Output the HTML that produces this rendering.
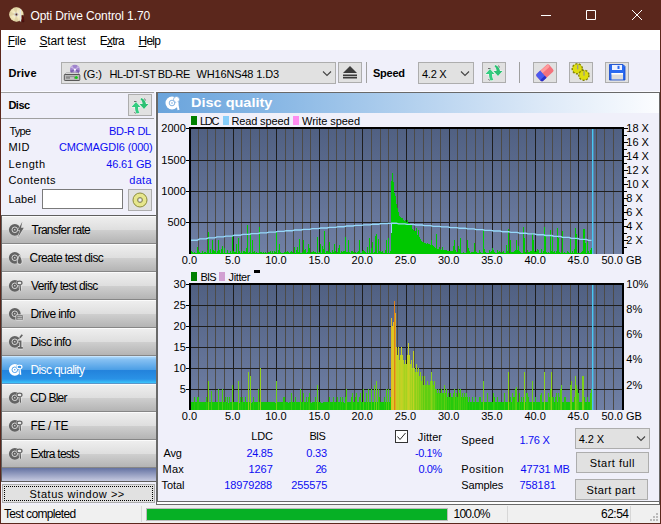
<!DOCTYPE html>
<html><head><meta charset="utf-8"><title>Opti Drive Control 1.70</title>
<style>
html,body{margin:0;padding:0}
body{width:661px;height:524px;overflow:hidden;background:#5b271c;position:relative;font-family:"Liberation Sans",sans-serif;font-size:12px;color:#000;line-height:14px}
.a{position:absolute;white-space:nowrap}
.b{font-weight:bold}
.bl{color:#0c0cf2}
.r{text-align:right}
.btn{position:absolute;background:#e1e1e1;border:1px solid #adadad;box-sizing:border-box}
.nav{position:absolute;left:2px;width:154px;height:28px;background:linear-gradient(#eeeeee 0%,#dedede 50%,#cfcfcf 50%,#b4b4b4 100%);border-top:1px solid #fbfbfb;border-bottom:1px solid #868686;box-sizing:border-box}
.nav span{position:absolute;left:29px;top:6px;font-size:12px;letter-spacing:-0.3px}
.nav.sel{background:linear-gradient(#a8d6fa 0%,#86c0f2 10%,#4c9fe6 49%,#2383dc 52%,#2a92e6 85%,#3cc6fc 100%);border-top-color:#c8e6ff;border-bottom-color:#5a96c8}
svg{position:absolute;overflow:visible}
</style></head><body>
<!-- title bar -->
<div class="a" style="left:0;top:0;width:661px;height:30px;background:#5b271c"></div>
<svg style="left:0;top:0" width="40" height="30" viewBox="0 0 40 30"><defs><radialGradient id="tg"><stop offset="0" stop-color="#fff8dc"/><stop offset="1" stop-color="#e8dcaa"/></radialGradient></defs><circle cx="16.4" cy="14.5" r="7.2" fill="url(#tg)"/><path d="M16.4 14.5L10 11.500L9.500 16ZM16.400 14.500L14 21L18.500 21.200ZM16.400 14.500L13 8L17.500 7.500Z" fill="#d8cc9c" opacity="0.7"/><circle cx="16.4" cy="14.5" r="2.1" fill="#c8c8c8"/><circle cx="16.4" cy="14.5" r="0.9" fill="#5a281c"/><path d="M19.6 9.500L21 8.800L21.200 21.600L19.800 21.600Z" fill="#e4e4e4"/><path d="M21.800 15.400L23.200 15.400L24 21.800L22 21.800Z" fill="#6e0a0a" stroke="#281010" stroke-width="0.5"/></svg>
<svg style="left:540px;top:7px" width="110" height="16" viewBox="0 0 110 16"><path d="M1 8.5H11M46.5 3.5H55.5V12.5H46.5ZM92 3L102 13M102 3L92 13" fill="none" stroke="#fff" stroke-width="1"/></svg>
<!-- menu -->
<div class="a" style="left:1px;top:30px;width:659px;height:20px;background:#fff"></div>
<!-- client bg -->
<div class="a" style="left:1px;top:50px;width:659px;height:473px;background:#f0f0fa"></div>
<!-- toolbar -->
<div class="btn" style="left:61px;top:62px;width:275px;height:22px"></div>
<svg style="left:322px;top:70px" width="10" height="8" viewBox="0 0 10 8"><path d="M1 1.5L5 5.5L9 1.5" fill="none" stroke="#444" stroke-width="1.1"/></svg>
<svg style="left:62px;top:62px" width="22" height="22" viewBox="62 62 22 22"><circle cx="74.9" cy="69.7" r="4.9" fill="#9f84cc"/><path d="M74.900 69.700L70.500 67.500L72 65.500ZM74.900 69.700L79.300 67.500L78 65.700ZM74.900 69.700L73 74.300L76.500 74.400Z" fill="#c8b4e6"/><path d="M74.900 69.700L70.200 70.500L71 73ZM74.900 69.700L79.700 70.500L78.800 73Z" fill="#7a5cac"/><circle cx="74.900" cy="69.700" r="1.1" fill="#fff"/><path d="M66.500 72.800H77.500L79.800 74.600H64.300Z" fill="#e6e6e6" stroke="#787878" stroke-width="0.5"/><rect x="64.3" y="74.500" width="15.500" height="6" rx="0.8" fill="#b9b9b9" stroke="#4b4b4b" stroke-width="0.9"/><rect x="66" y="76.300" width="9" height="2.400" fill="#8a8a8a"/><rect x="70" y="77.500" width="4" height="1" fill="#f0f0f0"/><circle cx="76.300" cy="77.500" r="1.500" fill="#14c814"/></svg>
<div class="btn" style="left:338px;top:62px;width:24px;height:21px"></div>
<svg style="left:342px;top:65px" width="16" height="16" viewBox="0 0 16 16"><path d="M8 1L15 8H1Z" fill="#3c3c3c"/><rect x="1" y="9.5" width="14" height="4" fill="#3c3c3c"/><rect x="1" y="11" width="14" height="1" fill="#bbb"/></svg>
<div class="a" style="left:366px;top:62px;width:1px;height:21px;background:#a0a0a0"></div>
<div class="btn" style="left:418px;top:62px;width:56px;height:22px"></div>
<svg style="left:460px;top:70px" width="10" height="8" viewBox="0 0 10 8"><path d="M1 1.5L5 5.5L9 1.5" fill="none" stroke="#444" stroke-width="1.1"/></svg>
<div class="btn" style="left:482px;top:62px;width:24px;height:21px"></div>
<svg style="left:482px;top:62px" width="24" height="21" viewBox="0 0 24 21"><path d="M3.500 12L8 7L12.500 12H10C10 14.500 10.500 16.500 11.500 18L8.500 18.500C7.500 16.500 7 14.500 7 12Z" fill="#34cc80" stroke="#f6fff8" stroke-width="1" paint-order="stroke"/><path d="M13 3C15.500 3.500 17.500 5.500 18 9H20.500L16 14L11.500 9H14.500C14.500 7 14 5.500 12.500 4.500Z" fill="#2cc074" stroke="#f6fff8" stroke-width="1" paint-order="stroke"/><path d="M6 6.500H8.500M16.500 3.500L17.500 5.500M6.500 17L7.500 18.500" stroke="#3c3c3c" stroke-width="0.700" fill="none"/></svg>
<div class="a" style="left:519px;top:62px;width:1px;height:21px;background:#a0a0a0"></div>
<div class="btn" style="left:533px;top:62px;width:24px;height:21px"></div>
<svg style="left:533px;top:62px" width="24" height="21" viewBox="533 62 24 21"><g transform="rotate(-42 545 73)"><rect x="536.500" y="68" width="17" height="9.500" rx="2" fill="#f4727c"/><rect x="537" y="68.500" width="16" height="3" rx="1.500" fill="#ff9c9c"/><path d="M538.500 68H543V77.500H538.500A2 2 0 0 1 536.500 75.500V70A2 2 0 0 1 538.500 68Z" fill="#4a5af0"/><path d="M538.500 75H543V77.500H538.500A2 2 0 0 1 536.500 75.500Z" fill="#2832c8"/></g></svg>
<div class="btn" style="left:569px;top:62px;width:24px;height:21px"></div>
<svg style="left:569px;top:62px" width="24" height="21" viewBox="569 62 24 21"><circle cx="577.3" cy="68.8" r="5" fill="#d4d400" stroke="#84840a" stroke-width="1.600" stroke-dasharray="2 1.500"/><circle cx="577.3" cy="68.8" r="4.300" fill="#dede10"/><rect x="577.1" y="64.8" width="1.200" height="4.500" fill="#969696"/><circle cx="583.9" cy="75.2" r="5" fill="#d4d400" stroke="#84840a" stroke-width="1.600" stroke-dasharray="2 1.500"/><circle cx="583.9" cy="75.2" r="4.300" fill="#dede10"/><rect x="583.4" y="71.2" width="1.200" height="4.500" fill="#969696"/></svg>
<div class="btn" style="left:605px;top:62px;width:24px;height:21px"></div>
<svg style="left:605px;top:62px" width="24" height="21" viewBox="605 62 24 21"><path d="M609.500 64.500H623L625 66.500V80H609.500Z" fill="#2a6af0" stroke="#1446c8" stroke-width="0.800"/><rect x="612" y="65" width="10" height="5" fill="#eef2ff"/><rect x="617.500" y="65.800" width="2" height="3.200" fill="#2a6af0"/><rect x="611.500" y="73" width="11.500" height="6.500" fill="#dcdcdc"/><rect x="611.500" y="73" width="11.500" height="1.500" fill="#fff"/></svg>
<!-- left panel -->
<div class="a" style="left:1px;top:92px;width:153px;height:1px;background:#a0a0a0"></div>
<div class="a" style="left:1px;top:118px;width:153px;height:1px;background:#a0a0a0"></div>
<div class="btn" style="left:128px;top:94px;width:24px;height:22px"></div>
<svg style="left:128px;top:94.500px" width="24" height="21" viewBox="0 0 24 21"><path d="M3.500 12L8 7L12.500 12H10C10 14.500 10.500 16.500 11.500 18L8.500 18.500C7.500 16.500 7 14.500 7 12Z" fill="#34cc80" stroke="#f6fff8" stroke-width="1" paint-order="stroke"/><path d="M13 3C15.500 3.500 17.500 5.500 18 9H20.500L16 14L11.500 9H14.500C14.500 7 14 5.500 12.500 4.500Z" fill="#2cc074" stroke="#f6fff8" stroke-width="1" paint-order="stroke"/><path d="M6 6.500H8.500M16.500 3.500L17.500 5.500M6.500 17L7.500 18.500" stroke="#3c3c3c" stroke-width="0.700" fill="none"/></svg>
<div class="a" style="left:42px;top:189px;width:81px;height:20px;background:#fff;border:1px solid #7a7a7a;box-sizing:border-box"></div>
<div class="btn" style="left:128px;top:189px;width:24px;height:22px"></div>
<svg style="left:132px;top:192px" width="16" height="16" viewBox="0 0 16 16"><circle cx="8" cy="8" r="7" fill="#e6e68c" stroke="#8c8c3c" stroke-width="1"/><circle cx="8" cy="8" r="2.5" fill="#c8c8c8" stroke="#78783c" stroke-width="0.8"/><circle cx="8" cy="8" r="1" fill="#fff"/></svg>
<!-- nav -->
<div class="a" style="left:1px;top:215px;width:155px;height:267px;background:#5f5f5f"></div>
<div class="nav" style="top:216px"></div>
<div class="nav" style="top:244px"></div>
<div class="nav" style="top:272px"></div>
<div class="nav" style="top:300px"></div>
<div class="nav" style="top:328px"></div>
<div class="nav sel" style="top:356px"></div>
<div class="nav" style="top:384px"></div>
<div class="nav" style="top:412px"></div>
<div class="nav" style="top:440px"></div>
<div class="a" style="left:2px;top:468px;width:154px;height:13px;background:linear-gradient(#6472a2,#c6cae0)"></div>
<div class="btn" style="left:2px;top:484px;width:153px;height:19px"></div>
<div class="a" style="left:4px;top:486px;width:147px;height:13px;border:1px dotted #000"></div>
<!-- main panel -->
<div class="a" style="left:1px;top:91px;width:659px;height:1px;background:#fafaff"></div>
<div class="a" style="left:155px;top:92px;width:1px;height:123px;background:#fafaff"></div>
<div class="a" style="left:156px;top:92px;width:504px;height:413px;background:#fff;border:1px solid #696969;box-sizing:border-box"></div>
<div class="a" style="left:156px;top:92px;width:504px;height:410px;background:#f0f0fa;border:1px solid #696969;border-left-width:2px;box-sizing:border-box"></div>
<div class="a" style="left:158px;top:93px;width:501px;height:20px;background:linear-gradient(90deg,#6aa4dc 0%,#86b6e4 22%,#b2d0ee 50%,#deeaf8 78%,#fcfdff 100%)"></div>
<svg style="left:0;top:0" width="661" height="524" viewBox="0 0 661 524" font-family="Liberation Sans, sans-serif" font-size="11">
<defs><linearGradient id="pg" x1="0" y1="0" x2="0" y2="1"><stop offset="0" stop-color="#506082"/><stop offset="1" stop-color="#7080a5"/></linearGradient></defs>
<rect x="190" y="128" width="433" height="126" fill="url(#pg)"/>
<path d="M198.5 128V254M207.5 128V254M215.5 128V254M224.5 128V254M241.5 128V254M250.5 128V254M259.5 128V254M267.5 128V254M285.5 128V254M293.5 128V254M302.5 128V254M310.5 128V254M328.5 128V254M336.5 128V254M345.5 128V254M354.5 128V254M371.5 128V254M380.5 128V254M388.5 128V254M397.5 128V254M414.5 128V254M423.5 128V254M431.5 128V254M440.5 128V254M457.5 128V254M466.5 128V254M475.5 128V254M483.5 128V254M501.5 128V254M509.5 128V254M518.5 128V254M526.5 128V254M544.5 128V254M552.5 128V254M561.5 128V254M570.5 128V254M587.5 128V254M596.5 128V254M604.5 128V254M613.5 128V254" stroke="#4c4b48" stroke-width="1" fill="none"/>
<path d="M233.5 128V254M276.5 128V254M319.5 128V254M362.5 128V254M406.5 128V254M449.5 128V254M492.5 128V254M535.5 128V254M578.5 128V254" stroke="#1e1e1e" stroke-width="1" fill="none"/>
<path d="M190 222.5H623M190 191.5H623M190 160.5H623" stroke="#1e1e1e" stroke-width="1" fill="none"/>
<path d="M190 254V253H191V254M191 254V251H192V254M192 254V252H193V254M193 254V253H194V254M194 254V252H195V254M195 254V253H196V254M196 254V253H197V254M197 254V247H198V254M198 254V250H199V254M199 254V252H200V254M200 254V253H201V254M201 254V253H202V254M202 254V251H203V254M203 254V253H204V254M204 254V252H205V254M205 254V252H206V254M206 254V253H207V254M207 254V250H208V254M208 254V232H209V254M209 254V253H210V254M210 254V249H211V254M211 254V253H212V254M212 254V240H213V254M213 254V250H214V254M214 254V251H215V254M215 254V250H216V254M216 254V253H217V254M217 254V251H218V254M218 254V240H219V254M219 254V250H220V254M220 254V253H221V254M221 254V249H222V254M222 254V246H223V254M223 254V253H224V254M224 254V248H225V254M225 254V253H226V254M226 254V253H227V254M227 254V250H228V254M228 254V253H229V254M229 254V253H230V254M230 254V251H231V254M231 254V253H232V254M232 254V235H233V254M233 254V251H234V254M234 254V252H235V254M235 254V252H236V254M236 254V244H237V254M237 254V253H238V254M238 254V238H239V254M239 254V251H240V254M240 254V253H241V254M241 254V251H242V254M242 254V253H243V254M243 254V251H244V254M244 254V251H245V254M245 254V252H246V254M246 254V248H247V254M247 254V225H248V254M248 254V253H249V254M249 254V252H250V254M250 254V233H251V254M251 254V253H252V254M252 254V240H253V254M253 254V252H254V254M254 254V251H255V254M255 254V253H256V254M256 254V252H257V254M257 254V253H258V254M258 254V253H259V254M259 254V227H260V254M260 254V252H261V254M261 254V252H262V254M262 254V253H263V254M263 254V252H264V254M264 254V253H265V254M265 254V252H266V254M266 254V253H267V254M267 254V253H268V254M268 254V252H269V254M269 254V252H270V254M270 254V251H271V254M271 254V253H272V254M272 254V251H273V254M273 254V253H274V254M274 254V251H275V254M275 254V252H276V254M276 254V232H277V254M277 254V253H278V254M278 254V250H279V254M279 254V244H280V254M280 254V252H281V254M281 254V253H282V254M282 254V253H283V254M283 254V253H284V254M284 254V252H285V254M285 254V252H286V254M286 254V252H287V254M287 254V251H288V254M288 254V252H289V254M289 254V253H290V254M290 254V252H291V254M291 254V251H292V254M292 254V252H293V254M293 254V253H294V254M294 254V247H295V254M295 254V253H296V254M296 254V250H297V254M297 254V247H298V254M298 254V252H299V254M299 254V239H300V254M300 254V253H301V254M301 254V253H302V254M302 254V252H303V254M303 254V240H304V254M304 254V250H305V254M305 254V249H306V254M306 254V253H307V254M307 254V252H308V254M308 254V244H309V254M309 254V248H310V254M310 254V253H311V254M311 254V252H312V254M312 254V252H313V254M313 254V251H314V254M314 254V252H315V254M315 254V252H316V254M316 254V253H317V254M317 254V237H318V254M318 254V253H319V254M319 254V252H320V254M320 254V244H321V254M321 254V253H322V254M322 254V246H323V254M323 254V249H324V254M324 254V231H325V254M325 254V253H326V254M326 254V251H327V254M327 254V251H328V254M328 254V252H329V254M329 254V242H330V254M330 254V252H331V254M331 254V253H332V254M332 254V250H333V254M333 254V252H334V254M334 254V244H335V254M335 254V251H336V254M336 254V253H337V254M337 254V252H338V254M338 254V248H339V254M339 254V245H340V254M340 254V253H341V254M341 254V251H342V254M342 254V252H343V254M343 254V251H344V254M344 254V251H345V254M345 254V237H346V254M346 254V252H347V254M347 254V252H348V254M348 254V240H349V254M349 254V252H350V254M350 254V253H351V254M351 254V251H352V254M352 254V251H353V254M353 254V252H354V254M354 254V253H355V254M355 254V252H356V254M356 254V253H357V254M357 254V252H358V254M358 254V251H359V254M359 254V240H360V254M360 254V253H361V254M361 254V253H362V254M362 254V251H363V254M363 254V250H364V254M364 254V251H365V254M365 254V252H366V254M366 254V253H367V254M367 254V247H368V254M368 254V253H369V254M369 254V238H370V254M370 254V253H371V254M371 254V248H372V254M372 254V242H373V254M373 254V253H374V254M374 254V252H375V254M375 254V236H376V254M376 254V234H377V254M377 254V253H378V254M378 254V239H379V254M379 254V251H380V254M380 254V251H381V254M381 254V252H382V254M382 254V251H383V254M383 254V253H384V254M384 254V253H385V254M385 254V250H386V254M386 254V240H387V254M387 254V253H388V254M388 254V238H389V254M389 254V253H390V254M390 254V251H391V254M391 254V181H392V254M392 254V173H393V254M393 254V182H394V254M394 254V193H395V254M395 254V196H396V254M396 254V204H397V254M397 254V208H398V254M398 254V212H399V254M399 254V216H400V254M400 254V217H401V254M401 254V218H402V254M402 254V218H403V254M403 254V220H404V254M404 254V221H405V254M405 254V220H406V254M406 254V222H407V254M407 254V220H408V254M408 254V223H409V254M409 254V223H410V254M410 254V225H411V254M411 254V225H412V254M412 254V229H413V254M413 254V230H414V254M414 254V231H415V254M415 254V231H416V254M416 254V228H417V254M417 254V235H418V254M418 254V230H419V254M419 254V237H420V254M420 254V239H421V254M421 254V241H422V254M422 254V242H423V254M423 254V242H424V254M424 254V243H425V254M425 254V243H426V254M426 254V244H427V254M427 254V243H428V254M428 254V244H429V254M429 254V244H430V254M430 254V245H431V254M431 254V240H432V254M432 254V245H433V254M433 254V246H434V254M434 254V247H435V254M435 254V248H436V254M436 254V234H437V254M437 254V249H438V254M438 254V249H439V254M439 254V247H440V254M440 254V249H441V254M441 254V250H442V254M442 254V247H443V254M443 254V250H444V254M444 254V250H445V254M445 254V250H446V254M446 254V250H447V254M447 254V251H448V254M448 254V251H449V254M449 254V251H450V254M450 254V251H451V254M451 254V251H452V254M452 254V251H453V254M453 254V246H454V254M454 254V240H455V254M455 254V250H456V254M456 254V252H457V254M457 254V252H458V254M458 254V246H459V254M459 254V249H460V254M460 254V238H461V254M461 254V253H462V254M462 254V253H463V254M463 254V252H464V254M464 254V253H465V254M465 254V253H466V254M466 254V252H467V254M467 254V240H468V254M468 254V248H469V254M469 254V251H470V254M470 254V253H471V254M471 254V252H472V254M472 254V252H473V254M473 254V252H474V254M474 254V243H475V254M475 254V251H476V254M476 254V252H477V254M477 254V253H478V254M478 254V253H479V254M479 254V250H480V254M480 254V252H481V254M481 254V253H482V254M482 254V253H483V254M483 254V230H484V254M484 254V249H485V254M485 254V252H486V254M486 254V253H487V254M487 254V253H488V254M488 254V253H489V254M489 254V250H490V254M490 254V252H491V254M491 254V251H492V254M492 254V248H493V254M493 254V250H494V254M494 254V252H495V254M495 254V253H496V254M496 254V253H497V254M497 254V250H498V254M498 254V252H499V254M499 254V251H500V254M500 254V252H501V254M501 254V253H502V254M502 254V252H503V254M503 254V251H504V254M504 254V253H505V254M505 254V253H506V254M506 254V245H507V254M507 254V251H508V254M508 254V229H509V254M509 254V253H510V254M510 254V240H511V254M511 254V252H512V254M512 254V252H513V254M513 254V252H514V254M514 254V251H515V254M515 254V250H516V254M516 254V240H517V254M517 254V250H518V254M518 254V246H519V254M519 254V251H520V254M520 254V252H521V254M521 254V253H522V254M522 254V253H523V254M523 254V227H524V254M524 254V238H525V254M525 254V252H526V254M526 254V253H527V254M527 254V250H528V254M528 254V252H529V254M529 254V252H530V254M530 254V251H531V254M531 254V251H532V254M532 254V233H533V254M533 254V240H534V254M534 254V251H535V254M535 254V252H536V254M536 254V251H537V254M537 254V249H538V254M538 254V250H539V254M539 254V253H540V254M540 254V253H541V254M541 254V249H542V254M542 254V253H543V254M543 254V251H544V254M544 254V227H545V254M545 254V236H546V254M546 254V252H547V254M547 254V253H548V254M548 254V252H549V254M549 254V253H550V254M550 254V230H551V254M551 254V251H552V254M552 254V236H553V254M553 254V252H554V254M554 254V251H555V254M555 254V253H556V254M556 254V251H557V254M557 254V228H558V254M558 254V238H559V254M559 254V252H560V254M560 254V253H561V254M561 254V252H562V254M562 254V231H563V254M563 254V253H564V254M564 254V252H565V254M565 254V253H566V254M566 254V253H567V254M567 254V251H568V254M568 254V252H569V254M569 254V253H570V254M570 254V238H571V254M571 254V253H572V254M572 254V251H573V254M573 254V253H574V254M574 254V249H575V254M575 254V228H576V254M576 254V234H577V254M577 254V253H578V254M578 254V253H579V254M579 254V253H580V254M580 254V253H581V254M581 254V252H582V254M582 254V251H583V254M583 254V229H584V254M584 254V229H585V254M585 254V243H586V254M586 254V253H587V254M587 254V242H588V254M588 254V251H589V254M589 254V253H590V254M590 254V250H591V254M591 254V248H592V254Z" fill="#00c800"/>
<path d="M190.0 240.8L191.5 240.2L197.4 240.2L199.8 238.9L206.1 238.9L208.5 237.9L214.7 237.9L217.1 236.9L223.4 236.9L225.8 236.1L232.0 236.1L234.4 235.2L240.6 235.2L243.0 234.4L249.3 234.4L251.7 233.6L257.9 233.6L260.3 232.9L266.6 232.9L269.0 232.1L275.2 232.1L277.6 231.4L283.8 231.4L286.2 230.7L292.5 230.7L294.9 230.0L301.1 230.0L303.5 229.3L309.8 229.3L312.2 228.6L318.4 228.6L320.8 228.0L327.0 228.0L329.4 227.3L335.7 227.3L338.1 226.7L344.3 226.7L346.7 226.0L353.0 226.0L355.4 225.4L361.6 225.4L364.0 224.8L370.2 224.8L372.6 224.2L378.9 224.2L381.3 223.5L387.5 223.5L389.9 223.2L396.2 223.2L398.6 223.8L404.8 223.8L407.2 224.4L413.4 224.4L415.8 225.0L422.1 225.0L424.5 225.6L430.7 225.6L433.1 226.3L439.4 226.3L441.8 226.9L448.0 226.9L450.4 227.6L456.6 227.6L459.0 228.2L465.3 228.2L467.7 228.9L473.9 228.9L476.3 229.6L482.6 229.6L485.0 230.3L491.2 230.3L493.6 231.0L499.8 231.0L502.2 231.7L508.5 231.7L510.9 232.4L517.1 232.4L519.5 233.2L525.8 233.2L528.2 233.9L534.4 233.9L536.8 234.7L543.0 234.7L545.4 235.5L551.7 235.5L554.1 236.4L560.3 236.4L562.7 237.3L569.0 237.3L571.4 238.3L577.6 238.3L580.0 239.4L586.2 239.4L588.6 240.4L591.5 240.4" stroke="#96d8fa" stroke-width="1.35" fill="none" stroke-linejoin="round"/>
<path d="M391.5 223V233" stroke="#96d8fa" stroke-width="1" fill="none"/>
<rect x="592" y="128" width="1" height="126" fill="#48c8f2"/><rect x="593" y="128" width="1" height="126" fill="#48c8f2" opacity="0.4"/>
<rect x="190" y="284" width="433" height="126" fill="url(#pg)"/>
<path d="M198.5 284V410M207.5 284V410M215.5 284V410M224.5 284V410M241.5 284V410M250.5 284V410M259.5 284V410M267.5 284V410M285.5 284V410M293.5 284V410M302.5 284V410M310.5 284V410M328.5 284V410M336.5 284V410M345.5 284V410M354.5 284V410M371.5 284V410M380.5 284V410M388.5 284V410M397.5 284V410M414.5 284V410M423.5 284V410M431.5 284V410M440.5 284V410M457.5 284V410M466.5 284V410M475.5 284V410M483.5 284V410M501.5 284V410M509.5 284V410M518.5 284V410M526.5 284V410M544.5 284V410M552.5 284V410M561.5 284V410M570.5 284V410M587.5 284V410M596.5 284V410M604.5 284V410M613.5 284V410" stroke="#4c4b48" stroke-width="1" fill="none"/>
<path d="M233.5 284V410M276.5 284V410M319.5 284V410M362.5 284V410M406.5 284V410M449.5 284V410M492.5 284V410M535.5 284V410M578.5 284V410" stroke="#1e1e1e" stroke-width="1" fill="none"/>
<path d="M190 389.5H623M190 368.5H623M190 347.5H623M190 326.5H623M190 305.5H623" stroke="#1e1e1e" stroke-width="1" fill="none"/>
<path d="M190 410V402H191V410M191 410V402H192V410M192 410V402H193V410M193 410V402H194V410M195 410V402H196V410M196 410V402H197V410M199 410V402H200V410M200 410V402H201V410M201 410V402H202V410M202 410V402H203V410M203 410V402H204V410M204 410V402H205V410M205 410V402H206V410M207 410V402H208V410M209 410V402H210V410M210 410V402H211V410M212 410V402H213V410M213 410V402H214V410M214 410V402H215V410M215 410V402H216V410M216 410V402H217V410M217 410V402H218V410M219 410V402H220V410M220 410V402H221V410M221 410V402H222V410M223 410V402H224V410M224 410V402H225V410M226 410V402H227V410M228 410V403H229V410M230 410V402H231V410M231 410V402H232V410M233 410V402H234V410M234 410V402H235V410M235 410V402H236V410M236 410V402H237V410M237 410V402H238V410M239 410V403H240V410M241 410V402H242V410M243 410V402H244V410M244 410V402H245V410M246 410V402H247V410M247 410V402H248V410M249 410V402H250V410M251 410V403H252V410M252 410V402H253V410M254 410V402H255V410M255 410V402H256V410M256 410V402H257V410M257 410V402H258V410M259 410V402H260V410M261 410V402H262V410M262 410V402H263V410M263 410V402H264V410M264 410V402H265V410M265 410V402H266V410M266 410V402H267V410M267 410V402H268V410M268 410V402H269V410M269 410V402H270V410M270 410V402H271V410M271 410V402H272V410M272 410V402H273V410M273 410V402H274V410M274 410V402H275V410M275 410V403H276V410M277 410V402H278V410M278 410V402H279V410M279 410V402H280V410M280 410V402H281V410M281 410V402H282V410M282 410V402H283V410M285 410V402H286V410M286 410V402H287V410M287 410V402H288V410M288 410V403H289V410M289 410V402H290V410M290 410V402H291V410M292 410V402H293V410M293 410V402H294V410M294 410V402H295V410M296 410V402H297V410M297 410V402H298V410M298 410V402H299V410M299 410V402H300V410M301 410V402H302V410M302 410V402H303V410M304 410V402H305V410M305 410V402H306V410M307 410V402H308V410M310 410V402H311V410M311 410V403H312V410M312 410V402H313V410M313 410V402H314V410M314 410V402H315V410M316 410V402H317V410M318 410V402H319V410M319 410V402H320V410M320 410V402H321V410M321 410V403H322V410M322 410V403H323V410M323 410V402H324V410M324 410V402H325V410M325 410V402H326V410M326 410V402H327V410M327 410V402H328V410M328 410V402H329V410M330 410V402H331V410M331 410V402H332V410M332 410V402H333V410M334 410V402H335V410M335 410V402H336V410M336 410V402H337V410M338 410V402H339V410M339 410V402H340V410M341 410V402H342V410M343 410V402H344V410M344 410V403H345V410M347 410V402H348V410M348 410V402H349V410M349 410V402H350V410M350 410V402H351V410M353 410V402H354V410M354 410V402H355V410M357 410V402H358V410M358 410V402H359V410M361 410V402H362V410M362 410V402H363V410M364 410V402H365V410M365 410V402H366V410M367 410V402H368V410M369 410V402H370V410M370 410V402H371V410M372 410V402H373V410M373 410V402H374V410M375 410V402H376V410M377 410V402H378V410M380 410V402H381V410M381 410V402H382V410M382 410V402H383V410M383 410V402H384V410M385 410V402H386V410M387 410V402H388V410M389 410V402H390V410M468 410V402H469V410M470 410V402H471V410M471 410V402H472V410M473 410V402H474V410M474 410V402H475V410M476 410V402H477V410M477 410V402H478V410M478 410V402H479V410M481 410V402H482V410M482 410V402H483V410M484 410V402H485V410M485 410V402H486V410M486 410V402H487V410M488 410V402H489V410M489 410V402H490V410M490 410V402H491V410M491 410V402H492V410M492 410V402H493V410M495 410V402H496V410M496 410V402H497V410M498 410V402H499V410M499 410V402H500V410M500 410V402H501V410M501 410V402H502V410M502 410V402H503V410M503 410V402H504V410M505 410V402H506V410M506 410V402H507V410M507 410V402H508V410M509 410V402H510V410M511 410V402H512V410M517 410V402H518V410M518 410V402H519V410M520 410V402H521V410M522 410V402H523V410M525 410V402H526V410M529 410V402H530V410M530 410V402H531V410M531 410V402H532V410M533 410V402H534V410M534 410V402H535V410M536 410V402H537V410M537 410V402H538V410M538 410V402H539V410M539 410V402H540V410M542 410V402H543V410M543 410V402H544V410M545 410V402H546V410M546 410V402H547V410M547 410V402H548V410M554 410V402H555V410M557 410V402H558V410M562 410V402H563V410M563 410V402H564V410M566 410V402H567V410M567 410V402H568V410M568 410V402H569V410M569 410V402H570V410M572 410V402H573V410M573 410V402H574V410M579 410V402H580V410M580 410V402H581V410M581 410V402H582V410M585 410V402H586V410M586 410V402H587V410M588 410V402H589V410M589 410V402H590V410Z" fill="#14c80a"/>
<path d="M194 410V397H195V410M197 410V397H198V410M198 410V397H199V410M206 410V397H207V410M225 410V397H226V410M227 410V397H228V410M229 410V397H230V410M240 410V397H241V410M242 410V397H243V410M245 410V397H246V410M253 410V397H254V410M283 410V397H284V410M284 410V397H285V410M295 410V397H296V410M306 410V397H307V410M308 410V397H309V410M315 410V397H316V410M329 410V397H330V410M333 410V397H334V410M337 410V397H338V410M340 410V397H341V410M342 410V397H343V410M345 410V397H346V410M351 410V397H352V410M355 410V397H356V410M359 410V397H360V410M379 410V397H380V410M384 410V397H385V410M390 410V397H391V410M447 410V397H448V410M449 410V397H450V410M451 410V397H452V410M452 410V397H453V410M455 410V397H456V410M457 410V397H458V410M461 410V397H462V410M463 410V397H464V410M465 410V397H466V410M467 410V397H468V410M469 410V397H470V410M472 410V397H473V410M475 410V397H476V410M479 410V397H480V410M480 410V397H481V410M494 410V397H495V410M497 410V397H498V410M510 410V397H511V410M513 410V397H514V410M514 410V397H515V410M521 410V397H522V410M523 410V397H524V410M528 410V397H529V410M535 410V397H536V410M549 410V397H550V410M552 410V397H553V410M553 410V397H554V410M555 410V397H556V410M559 410V397H560V410M564 410V397H565V410M565 410V397H566V410M574 410V397H575V410M584 410V397H585V410M587 410V397H588V410Z" fill="#26c90c"/>
<path d="M208 410V381H209V410M238 410V381H239V410M276 410V381H277V410M376 410V381H377V410M421 410V381H422V410M427 410V381H428V410M430 410V381H431V410M432 410V381H433V410M434 410V381H435V410M483 410V381H484V410M532 410V381H533V410M571 410V381H572V410Z" fill="#70d014"/>
<path d="M211 410V391H212V410Z" fill="#42cc0f"/>
<path d="M218 410V389H219V410M222 410V389H223V410M258 410V389H259V410M300 410V389H301V410M346 410V389H347V410M363 410V389H364V410M368 410V389H369V410M371 410V389H372V410M378 410V389H379V410M386 410V389H387V410M388 410V389H389V410M435 410V389H436V410M436 410V389H437V410M438 410V389H439V410M441 410V389H442V410M446 410V389H447V410M454 410V389H455V410M458 410V389H459V410M460 410V389H461V410M515 410V389H516V410M550 410V389H551V410M560 410V389H561V410M577 410V389H578V410M591 410V389H592V410Z" fill="#4ccd10"/>
<path d="M232 410V385H233V410M317 410V385H318V410M374 410V385H375V410M423 410V385H424V410M425 410V385H426V410M426 410V385H427V410M428 410V385H429V410M429 410V385H430V410M433 410V385H434V410M444 410V385H445V410M561 410V385H562V410M570 410V385H571V410M576 410V385H577V410Z" fill="#5fce12"/>
<path d="M248 410V372H249V410M415 410V372H416V410M417 410V372H418V410M420 410V372H421V410M431 410V372H432V410M508 410V372H509V410M524 410V372H525V410M544 410V372H545V410M551 410V372H552V410Z" fill="#8bd119"/>
<path d="M250 410V376H251V410M419 410V376H420V410M422 410V376H423V410M424 410V376H425V410M575 410V376H576V410M582 410V376H583V410M583 410V376H584V410Z" fill="#7ed017"/>
<path d="M260 410V368H261V410M412 410V368H413V410M414 410V368H415V410M418 410V368H419V410Z" fill="#98d21c"/>
<path d="M291 410V393H292V410M303 410V393H304V410M309 410V393H310V410M352 410V393H353V410M356 410V393H357V410M360 410V393H361V410M366 410V393H367V410M437 410V393H438V410M439 410V393H440V410M440 410V393H441V410M442 410V393H443V410M443 410V393H444V410M445 410V393H446V410M448 410V393H449V410M450 410V393H451V410M453 410V393H454V410M456 410V393H457V410M459 410V393H460V410M462 410V393H463V410M464 410V393H465V410M466 410V393H467V410M487 410V393H488V410M493 410V393H494V410M504 410V393H505V410M512 410V393H513V410M519 410V393H520V410M526 410V393H527V410M527 410V393H528V410M541 410V393H542V410M548 410V393H549V410M556 410V393H557V410M558 410V393H559V410M578 410V393H579V410M590 410V393H591V410Z" fill="#39cb0e"/>
<path d="M391 410V318H392V410Z" fill="#e0bc22"/>
<path d="M392 410V326H393V410Z" fill="#dbc924"/>
<path d="M393 410V322H394V410Z" fill="#dfc824"/>
<path d="M394 410V301H395V410Z" fill="#e08018"/>
<path d="M395 410V313H396V410Z" fill="#e0ad1f"/>
<path d="M396 410V347H397V410M398 410V347H399V410M401 410V347H402V410Z" fill="#c6d024"/>
<path d="M397 410V355H398V410M400 410V355H401V410M402 410V355H403V410M407 410V355H408V410M409 410V355H410V410Z" fill="#bed324"/>
<path d="M399 410V360H400V410M403 410V360H404V410M405 410V360H406V410M411 410V360H412V410Z" fill="#b3d321"/>
<path d="M404 410V364H405V410M406 410V364H407V410M410 410V364H411V410M416 410V364H417V410Z" fill="#a6d21f"/>
<path d="M408 410V343H409V410Z" fill="#cacf24"/>
<path d="M413 410V351H414V410Z" fill="#c2d224"/>
<path d="M516 410V387H517V410Z" fill="#55cd11"/>
<path d="M540 410V395H541V410Z" fill="#30ca0d"/>
<rect x="592" y="284" width="1" height="126" fill="#48c8f2"/><rect x="593" y="284" width="1" height="126" fill="#48c8f2" opacity="0.4"/>
<path d="M189 128H624M190 127V254M623 127V254" stroke="#000" stroke-width="2" fill="none"/>
<path d="M189 284H624M190 283V410M623 283V410" stroke="#000" stroke-width="2" fill="none"/>
<path d="M186 128.5H189M186 160.5H189M186 191.5H189M186 222.5H189M624 128.5H628M624 135.5H627M624 142.5H628M624 149.5H627M624 156.5H628M624 163.5H627M624 170.5H628M624 177.5H627M624 184.5H628M624 191.5H627M624 198.5H628M624 205.5H627M624 212.5H628M624 219.5H627M624 226.5H628M624 233.5H627M624 240.5H628M624 247.5H627" stroke="#000" stroke-width="1" fill="none"/>
<text x="185.8" y="131.7" text-anchor="end">2000</text>
<text x="185.8" y="163.7" text-anchor="end">1500</text>
<text x="185.8" y="194.7" text-anchor="end">1000</text>
<text x="185.8" y="225.7" text-anchor="end">500</text>
<text x="626.3" y="131.7">18 X</text>
<text x="626.3" y="145.7">16 X</text>
<text x="626.3" y="159.7">14 X</text>
<text x="626.3" y="173.7">12 X</text>
<text x="626.3" y="187.7">10 X</text>
<text x="626.3" y="201.7">8 X</text>
<text x="626.3" y="215.7">6 X</text>
<text x="626.3" y="229.7">4 X</text>
<text x="626.3" y="243.7">2 X</text>
<text x="189.5" y="264" text-anchor="middle">0.0</text>
<text x="232.7" y="264" text-anchor="middle">5.0</text>
<text x="275.9" y="264" text-anchor="middle">10.0</text>
<text x="319.1" y="264" text-anchor="middle">15.0</text>
<text x="362.3" y="264" text-anchor="middle">20.0</text>
<text x="405.5" y="264" text-anchor="middle">25.0</text>
<text x="448.7" y="264" text-anchor="middle">30.0</text>
<text x="491.9" y="264" text-anchor="middle">35.0</text>
<text x="535.1" y="264" text-anchor="middle">40.0</text>
<text x="578.3" y="264" text-anchor="middle">45.0</text>
<text x="601.5" y="264">50.0 GB</text>
<text x="189.5" y="420" text-anchor="middle">0.0</text>
<text x="232.7" y="420" text-anchor="middle">5.0</text>
<text x="275.9" y="420" text-anchor="middle">10.0</text>
<text x="319.1" y="420" text-anchor="middle">15.0</text>
<text x="362.3" y="420" text-anchor="middle">20.0</text>
<text x="405.5" y="420" text-anchor="middle">25.0</text>
<text x="448.7" y="420" text-anchor="middle">30.0</text>
<text x="491.9" y="420" text-anchor="middle">35.0</text>
<text x="535.1" y="420" text-anchor="middle">40.0</text>
<text x="578.3" y="420" text-anchor="middle">45.0</text>
<text x="601.5" y="420">50.0 GB</text>
<path d="M186 284.5H189M186 305.5H189M186 326.5H189M186 347.5H189M186 368.5H189M186 389.5H189" stroke="#000" stroke-width="1" fill="none"/>
<text x="185.8" y="287.7" text-anchor="end">30</text>
<text x="185.8" y="308.7" text-anchor="end">25</text>
<text x="185.8" y="329.7" text-anchor="end">20</text>
<text x="185.8" y="350.7" text-anchor="end">15</text>
<text x="185.8" y="371.7" text-anchor="end">10</text>
<text x="185.8" y="392.7" text-anchor="end">5</text>
<text x="626.3" y="287.7">10%</text>
<text x="626.3" y="312.9">8%</text>
<text x="626.3" y="338.1">6%</text>
<text x="626.3" y="363.3">4%</text>
<text x="626.3" y="388.5">2%</text>
<rect x="191" y="116" width="6" height="9" fill="#008000"/><text x="200" y="125" textLength="19.5">LDC</text>
<rect x="223" y="116" width="6" height="9" fill="#87cefa"/><text x="231.5" y="125" textLength="58">Read speed</text>
<rect x="293" y="116" width="6" height="9" fill="#ff8cf0"/><text x="302" y="125" textLength="58">Write speed</text>
<rect x="191" y="272" width="6" height="9" fill="#008000"/><text x="200.5" y="281" textLength="16">BIS</text>
<rect x="219" y="272" width="6" height="9" fill="#d2a0d2"/><text x="228.5" y="281" textLength="22">Jitter</text>
<rect x="254" y="270" width="6" height="3" fill="#000"/>
<g transform="translate(165,95)"><circle cx="7" cy="8" r="6.5" fill="#fff"/><circle cx="7" cy="8" r="2.8" fill="none" stroke="#78aadc" stroke-width="0.9"/><circle cx="7" cy="8" r="0.8" fill="#78aadc"/><circle cx="11.5" cy="4.5" r="3" fill="#fff" stroke="#78aadc" stroke-width="0.8"/><path d="M12 7L13.5 15" stroke="#fff" stroke-width="2"/></g>
</svg>
<svg style="left:0;top:0" width="40" height="524" viewBox="0 0 40 524"><circle cx="14.8" cy="229.8" r="6.4" fill="#e8e8e8" opacity="0.35"/><circle cx="14.8" cy="229.8" r="5.9" fill="#636363"/><circle cx="14.8" cy="229.8" r="2.8" fill="none" stroke="#e8e8e8" stroke-width="0.85"/><circle cx="14.8" cy="229.8" r="0.7" fill="#e8e8e8"/><path d="M22.3 221.8L17.8 230.3H20.1L17.8 237.8L23.8 227.8H21.0Z" fill="#636363" stroke="#e8e8e8" stroke-width="0.9" paint-order="stroke"/><circle cx="14.8" cy="257.8" r="6.4" fill="#e8e8e8" opacity="0.35"/><circle cx="14.8" cy="257.8" r="5.9" fill="#636363"/><circle cx="14.8" cy="257.8" r="2.8" fill="none" stroke="#e8e8e8" stroke-width="0.85"/><circle cx="14.8" cy="257.8" r="0.7" fill="#e8e8e8"/><path d="M19.3 255.3C22.8 258.8 23.3 264.3 19.8 264.3C16.3 264.3 16.8 260.8 19.3 255.3Z" fill="#636363" stroke="#e8e8e8" stroke-width="0.9"/><circle cx="14.8" cy="285.8" r="6.4" fill="#e8e8e8" opacity="0.35"/><circle cx="14.8" cy="285.8" r="5.9" fill="#636363"/><circle cx="14.8" cy="285.8" r="2.8" fill="none" stroke="#e8e8e8" stroke-width="0.85"/><circle cx="14.8" cy="285.8" r="0.7" fill="#e8e8e8"/><ellipse cx="19.5" cy="282.90000000000003" rx="3.3" ry="2.6" fill="#e8e8e8"/><ellipse cx="19.5" cy="282.90000000000003" rx="2.5" ry="1.8" fill="#e8e8e8" stroke="#636363" stroke-width="1.2"/><path d="M20.0 284.8L20.5 290.8" stroke="#e8e8e8" stroke-width="2.8" fill="none"/><path d="M20.0 284.8L20.5 290.8" stroke="#636363" stroke-width="1.4" fill="none"/><circle cx="14.8" cy="313.8" r="6.4" fill="#e8e8e8" opacity="0.35"/><circle cx="14.8" cy="313.8" r="5.9" fill="#636363"/><circle cx="14.8" cy="313.8" r="2.8" fill="none" stroke="#e8e8e8" stroke-width="0.85"/><circle cx="14.8" cy="313.8" r="0.7" fill="#e8e8e8"/><rect x="15.8" y="314.8" width="7.5" height="5.5" rx="1" fill="#636363" stroke="#e8e8e8" stroke-width="0.8"/><path d="M17.3 316.8H22.3M17.3 318.8H22.3" stroke="#e8e8e8" stroke-width="0.9"/><circle cx="14.8" cy="341.8" r="6.4" fill="#e8e8e8" opacity="0.35"/><circle cx="14.8" cy="341.8" r="5.9" fill="#636363"/><circle cx="14.8" cy="341.8" r="2.8" fill="none" stroke="#e8e8e8" stroke-width="0.85"/><circle cx="14.8" cy="341.8" r="0.7" fill="#e8e8e8"/><path d="M17.8 340.8H20.8V347.8H22.8H17.8" fill="none" stroke="#e8e8e8" stroke-width="3.2"/><path d="M18.3 341.3H20.6V347.8M17.8 347.8H22.8M19.8 337.8L22.3 334.8" fill="none" stroke="#636363" stroke-width="1.7"/><circle cx="14.8" cy="369.8" r="6.4" fill="#3c96e6" opacity="0.35"/><circle cx="14.8" cy="369.8" r="5.9" fill="#fff"/><circle cx="14.8" cy="369.8" r="2.8" fill="none" stroke="#3c96e6" stroke-width="0.85"/><circle cx="14.8" cy="369.8" r="0.7" fill="#3c96e6"/><ellipse cx="19.5" cy="366.90000000000003" rx="3.3" ry="2.6" fill="#3c96e6"/><ellipse cx="19.5" cy="366.90000000000003" rx="2.5" ry="1.8" fill="#3c96e6" stroke="#fff" stroke-width="1.2"/><path d="M20.0 368.8L20.5 374.8" stroke="#3c96e6" stroke-width="2.8" fill="none"/><path d="M20.0 368.8L20.5 374.8" stroke="#fff" stroke-width="1.4" fill="none"/><circle cx="14.8" cy="397.8" r="6.4" fill="#e8e8e8" opacity="0.35"/><circle cx="14.8" cy="397.8" r="5.9" fill="#636363"/><circle cx="14.8" cy="397.8" r="2.8" fill="none" stroke="#e8e8e8" stroke-width="0.85"/><circle cx="14.8" cy="397.8" r="0.7" fill="#e8e8e8"/><ellipse cx="19.5" cy="394.90000000000003" rx="3.3" ry="2.6" fill="#e8e8e8"/><ellipse cx="19.5" cy="394.90000000000003" rx="2.5" ry="1.8" fill="#e8e8e8" stroke="#636363" stroke-width="1.2"/><path d="M20.0 396.8L20.5 402.8" stroke="#e8e8e8" stroke-width="2.8" fill="none"/><path d="M20.0 396.8L20.5 402.8" stroke="#636363" stroke-width="1.4" fill="none"/><circle cx="14.8" cy="425.8" r="6.4" fill="#e8e8e8" opacity="0.35"/><circle cx="14.8" cy="425.8" r="5.9" fill="#636363"/><circle cx="14.8" cy="425.8" r="2.8" fill="none" stroke="#e8e8e8" stroke-width="0.85"/><circle cx="14.8" cy="425.8" r="0.7" fill="#e8e8e8"/><ellipse cx="19.5" cy="422.90000000000003" rx="3.3" ry="2.6" fill="#e8e8e8"/><ellipse cx="19.5" cy="422.90000000000003" rx="2.5" ry="1.8" fill="#e8e8e8" stroke="#636363" stroke-width="1.2"/><path d="M20.0 424.8L20.5 430.8" stroke="#e8e8e8" stroke-width="2.8" fill="none"/><path d="M20.0 424.8L20.5 430.8" stroke="#636363" stroke-width="1.4" fill="none"/><circle cx="14.8" cy="453.8" r="6.4" fill="#e8e8e8" opacity="0.35"/><circle cx="14.8" cy="453.8" r="5.9" fill="#636363"/><circle cx="14.8" cy="453.8" r="2.8" fill="none" stroke="#e8e8e8" stroke-width="0.85"/><circle cx="14.8" cy="453.8" r="0.7" fill="#e8e8e8"/><ellipse cx="19.5" cy="450.90000000000003" rx="3.3" ry="2.6" fill="#e8e8e8"/><ellipse cx="19.5" cy="450.90000000000003" rx="2.5" ry="1.8" fill="#e8e8e8" stroke="#636363" stroke-width="1.2"/><path d="M20.0 452.8L20.5 458.8" stroke="#e8e8e8" stroke-width="2.8" fill="none"/><path d="M20.0 452.8L20.5 458.8" stroke="#636363" stroke-width="1.4" fill="none"/></svg>
<!-- stats -->
<div class="a" style="left:395px;top:430px;width:13px;height:13px;background:#fff;border:1px solid #333;box-sizing:border-box"></div>
<svg style="left:396px;top:431px" width="11" height="11" viewBox="0 0 11 11"><path d="M1.5 5.5L4 8.500L9.500 2" fill="none" stroke="#2a2a2a" stroke-width="1"/></svg>
<div class="btn" style="left:575px;top:428px;width:75px;height:21px"></div>
<svg style="left:636px;top:435px" width="10" height="8" viewBox="0 0 10 8"><path d="M1 1.5L5 5.5L9 1.5" fill="none" stroke="#444" stroke-width="1.1"/></svg>
<div class="btn" style="left:576px;top:452px;width:73px;height:21px"></div>
<div class="btn" style="left:575px;top:479px;width:73px;height:21px"></div>
<!-- status bar -->
<div class="a" style="left:1px;top:505px;width:659px;height:18px;background:#f0f0f0"></div>
<div class="a" style="left:141px;top:506px;width:1px;height:16px;background:#d7d7d7"></div>
<div class="a" style="left:146px;top:508px;width:302px;height:13px;background:#e6e6e6;border:1px solid #bcbcbc;box-sizing:border-box"></div>
<div class="a" style="left:147px;top:509px;width:300px;height:11px;background:#06b025"></div>
<div class="a" style="left:507px;top:506px;width:1px;height:16px;background:#d7d7d7"></div>
<div class="a" style="left:630px;top:506px;width:1px;height:16px;background:#d7d7d7"></div>
<svg style="left:0;top:0" width="661" height="524" viewBox="0 0 661 524"><g fill="#bababa"><rect x="656" y="513" width="2" height="2"/><rect x="653" y="516" width="2" height="2"/><rect x="656" y="516" width="2" height="2"/><rect x="650" y="519" width="2" height="2"/><rect x="653" y="519" width="2" height="2"/><rect x="656" y="519" width="2" height="2"/></g></svg>
<div class="a" style="left:30.5px;top:9.0px;letter-spacing:-0.11px;color:#fff;font-size:12px">Opti Drive Control 1.70</div>
<div class="a" style="left:7.8px;top:34.0px;letter-spacing:-0.35px;font-size:12px"><u>F</u>ile</div>
<div class="a" style="left:39.5px;top:34.0px;letter-spacing:-0.2px;font-size:12px"><u>S</u>tart test</div>
<div class="a" style="left:99.7px;top:34.0px;letter-spacing:-0.75px;font-size:12px">E<u>x</u>tra</div>
<div class="a" style="left:138.5px;top:34.0px;letter-spacing:-0.75px;font-size:12px"><u>H</u>elp</div>
<div class="a b" style="left:8.4px;top:66.0px;letter-spacing:0.15px;font-size:11px">Drive</div>
<div class="a" style="left:83.2px;top:67.0px;letter-spacing:-0.07px;font-size:11px">(G:)</div>
<div class="a" style="left:109.5px;top:67.0px;letter-spacing:-0.45px;font-size:11px">HL-DT-ST BD-RE</div>
<div class="a" style="left:196.4px;top:67.0px;letter-spacing:-0.14px;font-size:11px">WH16NS48 1.D3</div>
<div class="a b" style="left:373.0px;top:66.0px;letter-spacing:-0.25px;font-size:11px">Speed</div>
<div class="a" style="left:422.0px;top:67.0px;letter-spacing:-0.25px;font-size:11px">4.2 X</div>
<div class="a b" style="left:8.4px;top:97.7px;letter-spacing:-0.47px;font-size:11px">Disc</div>
<div class="a" style="left:9.5px;top:124.0px;letter-spacing:-0.75px;font-size:11px">Type</div>
<div class="a" style="left:8.5px;top:140.2px;letter-spacing:0.35px;font-size:11px">MID</div>
<div class="a" style="left:8.5px;top:157.0px;letter-spacing:0.6px;font-size:11px">Length</div>
<div class="a" style="left:8.5px;top:173.2px;letter-spacing:0.43px;font-size:11px">Contents</div>
<div class="a" style="left:8.5px;top:192.0px;letter-spacing:0.12px;font-size:11px">Label</div>
<div class="a bl" style="left:109.0px;top:124.0px;letter-spacing:-0.3px;font-size:11px">BD-R DL</div>
<div class="a bl" style="left:59.0px;top:140.2px;letter-spacing:-0.16px;font-size:11px">CMCMAGDI6 (000)</div>
<div class="a bl" style="left:106.2px;top:157.0px;letter-spacing:-0.14px;font-size:11px">46.61 GB</div>
<div class="a bl" style="left:129.2px;top:173.2px;letter-spacing:0.33px;font-size:11px">data</div>
<div class="a" style="left:31.5px;top:222.8px;letter-spacing:-0.75px;font-size:12px">Transfer rate</div>
<div class="a" style="left:29.6px;top:250.8px;letter-spacing:-0.61px;font-size:12px">Create test disc</div>
<div class="a" style="left:31.0px;top:278.8px;letter-spacing:-0.67px;font-size:12px">Verify test disc</div>
<div class="a" style="left:30.5px;top:306.8px;letter-spacing:-0.61px;font-size:12px">Drive info</div>
<div class="a" style="left:30.5px;top:334.8px;letter-spacing:-0.65px;font-size:12px">Disc info</div>
<div class="a" style="left:30.5px;top:362.8px;letter-spacing:-0.62px;color:#fff;font-size:12px">Disc quality</div>
<div class="a" style="left:30.0px;top:390.8px;letter-spacing:-0.75px;font-size:12px">CD Bler</div>
<div class="a" style="left:30.5px;top:418.8px;letter-spacing:-0.42px;font-size:12px">FE / TE</div>
<div class="a" style="left:30.5px;top:446.8px;letter-spacing:-0.75px;font-size:12px">Extra tests</div>
<div class="a" style="left:29.5px;top:486.7px;letter-spacing:0.53px;font-size:11px">Status window &gt;&gt;</div>
<div class="a b" style="left:191.0px;top:96.4px;transform:scaleX(1.115);transform-origin:0 0;color:#fff;font-size:13px">Disc quality</div>
<div class="a" style="left:251.2px;top:428.5px;letter-spacing:-0.15px;font-size:11px">LDC</div>
<div class="a" style="left:309.5px;top:428.5px;letter-spacing:-0.75px;font-size:11px">BIS</div>
<div class="a" style="left:163.5px;top:445.6px;letter-spacing:-0.15px;font-size:11px">Avg</div>
<div class="a" style="left:162.5px;top:461.6px;letter-spacing:0.25px;font-size:11px">Max</div>
<div class="a" style="left:161.5px;top:477.5px;letter-spacing:-0.05px;font-size:11px">Total</div>
<div class="a bl" style="left:246.4px;top:445.6px;letter-spacing:-0.27px;font-size:11px">24.85</div>
<div class="a bl" style="left:248.5px;top:461.6px;letter-spacing:-0.07px;font-size:11px">1267</div>
<div class="a bl" style="left:224.2px;top:477.5px;letter-spacing:-0.13px;font-size:11px">18979288</div>
<div class="a bl" style="left:306.2px;top:445.6px;letter-spacing:-0.17px;font-size:11px">0.33</div>
<div class="a bl" style="left:315.4px;top:461.6px;letter-spacing:-0.75px;font-size:11px">26</div>
<div class="a bl" style="left:291.2px;top:477.5px;letter-spacing:-0.1px;font-size:11px">255575</div>
<div class="a" style="left:417.8px;top:429.5px;letter-spacing:0.08px;font-size:11px">Jitter</div>
<div class="a bl" style="left:415.0px;top:445.6px;letter-spacing:-0.45px;font-size:11px">-0.1%</div>
<div class="a bl" style="left:418.6px;top:461.6px;letter-spacing:-0.47px;font-size:11px">0.0%</div>
<div class="a" style="left:461.2px;top:432.7px;letter-spacing:0.2px;font-size:11px">Speed</div>
<div class="a" style="left:461.2px;top:461.6px;letter-spacing:0.46px;font-size:11px">Position</div>
<div class="a" style="left:461.2px;top:477.5px;letter-spacing:-0.13px;font-size:11px">Samples</div>
<div class="a bl" style="left:519.4px;top:432.7px;letter-spacing:-0.28px;font-size:11px">1.76 X</div>
<div class="a bl" style="left:520.4px;top:461.6px;letter-spacing:-0.09px;font-size:11px">47731 MB</div>
<div class="a bl" style="left:519.4px;top:477.5px;letter-spacing:-0.04px;font-size:11px">758181</div>
<div class="a" style="left:578.8px;top:431.5px;letter-spacing:-0.12px;font-size:11px">4.2 X</div>
<div class="a" style="left:589.7px;top:455.6px;letter-spacing:0.49px;font-size:11px">Start full</div>
<div class="a" style="left:586.5px;top:482.8px;letter-spacing:0.38px;font-size:11px">Start part</div>
<div class="a" style="left:4.0px;top:506.8px;letter-spacing:-0.66px;font-size:12px">Test completed</div>
<div class="a" style="left:453.5px;top:506.8px;letter-spacing:-0.75px;font-size:12px">100.0%</div>
<div class="a" style="left:601.0px;top:506.8px;letter-spacing:-0.5px;font-size:12px">62:54</div>
</body></html>
